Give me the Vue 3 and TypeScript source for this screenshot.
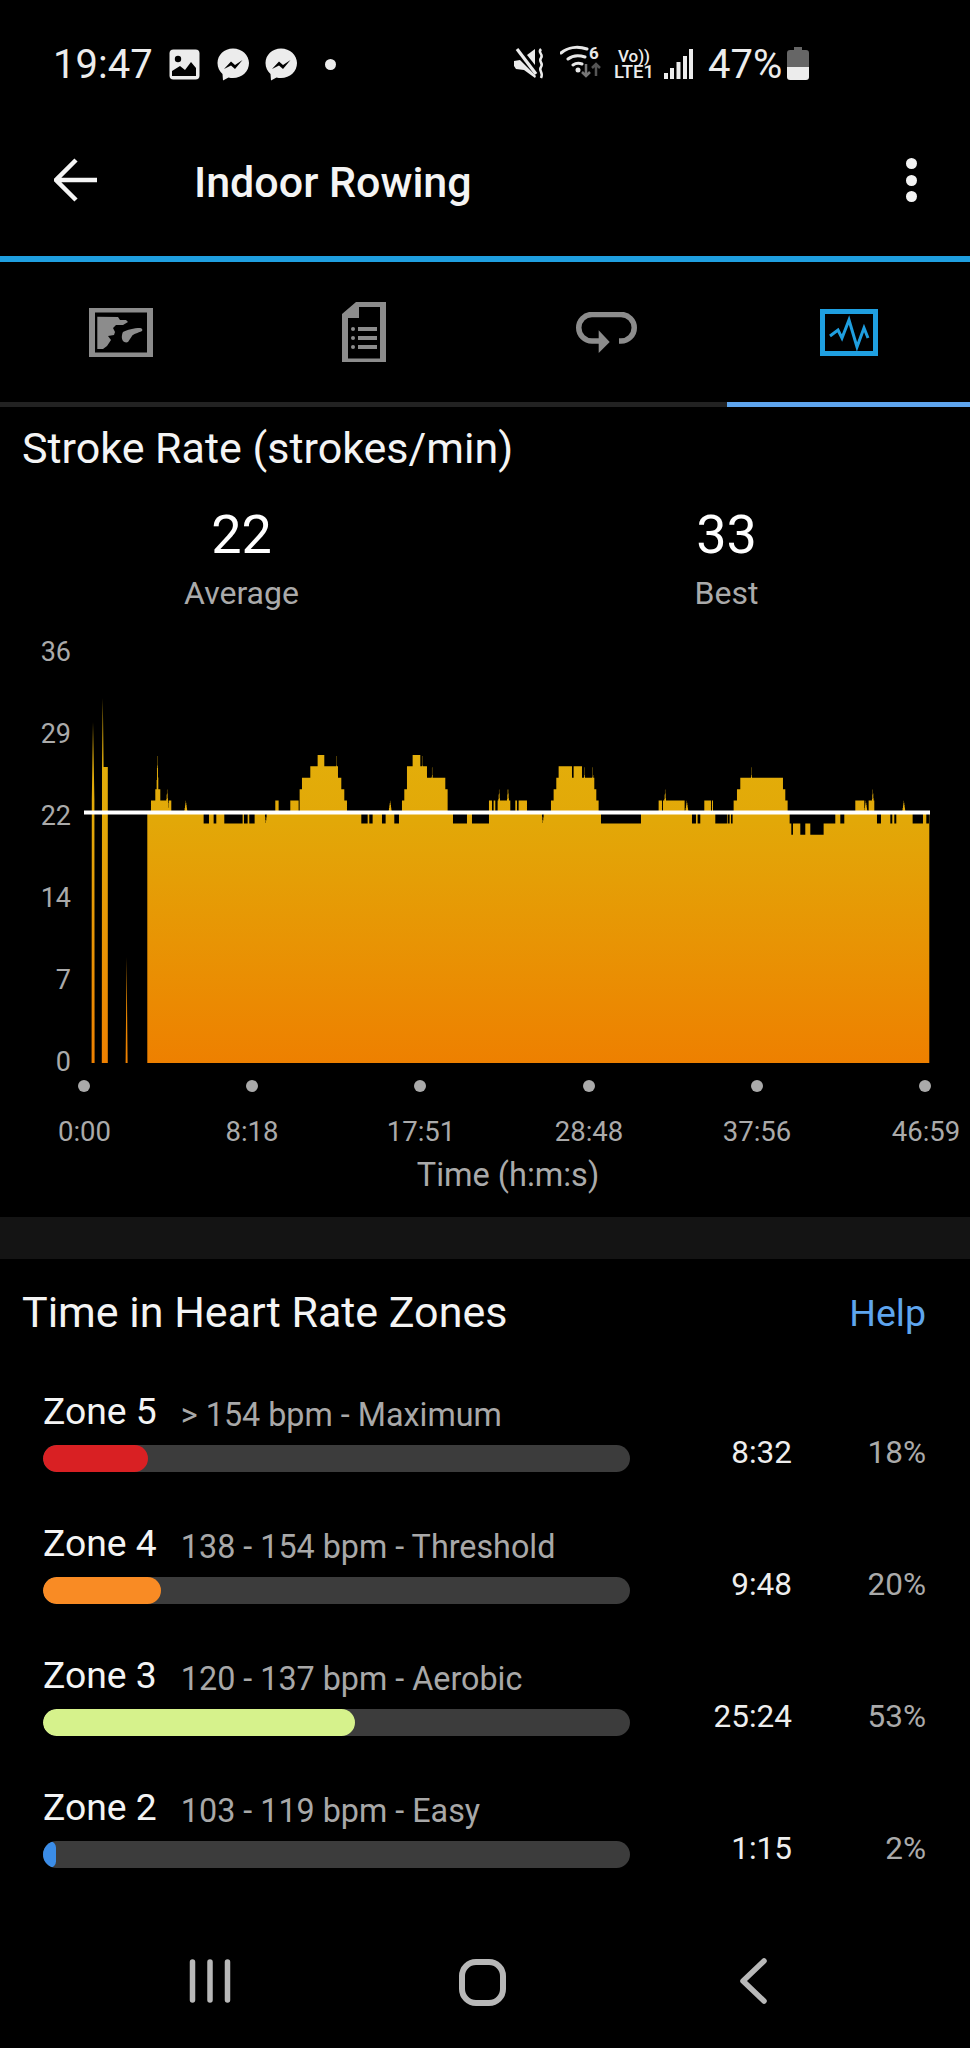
<script setup lang="ts">
type Seg = [number, number, number]
type Spike = [number, number]

const LEFT = 147.3
const RIGHT = 929.3
const y = (l: number) => 1063 - l * 11.41
const a = (z: number) => 40 + z / 3
const b = (z: number) => 490 + z / 3

const segsA: Seg[] = [
  [332, 345, 23], [345, 360, 24], [360, 378, 23], [385, 393, 23],
  [490, 506, 21], [520, 528, 21], [552, 607, 21], [611, 622, 21], [627, 643, 21],
  [705, 715, 23], [750, 775, 23], [778, 785, 24], [785, 790, 25], [790, 810, 25],
  [810, 832, 26], [832, 852, 27], [852, 893, 26], [893, 903, 25], [903, 912, 24], [912, 920, 23],
  [963, 982, 21], [987, 997, 21], [1025, 1036, 21], [1062, 1076, 21],
  [1085, 1092, 23], [1092, 1100, 24], [1100, 1117, 26], [1117, 1140, 27], [1140, 1160, 26],
  [1160, 1170, 25], [1170, 1215, 25], [1215, 1222, 24],
  [1238, 1280, 21], [1295, 1346, 21], [1346, 1353, 23],
]
const segsB: Seg[] = [
  [0, 5, 23], [10, 15, 23], [22, 60, 23], [75, 80, 23], [85, 110, 23],
  [182, 190, 23], [190, 198, 24], [198, 205, 25], [205, 245, 26], [245, 250, 25], [250, 275, 26],
  [275, 312, 25], [312, 318, 24], [318, 325, 23], [332, 452, 21],
  [505, 515, 23], [518, 583, 23], [605, 617, 21], [622, 630, 21], [642, 662, 23], [665, 668, 23],
  [675, 710, 21], [712, 718, 21], [722, 727, 21], [730, 740, 23], [740, 750, 24], [750, 878, 25],
  [878, 885, 24], [885, 892, 23], [898, 903, 21], [903, 908, 20], [908, 915, 21], [915, 930, 21],
  [930, 945, 20], [945, 960, 21], [960, 1000, 20], [1000, 1035, 21],
  [1050, 1062, 21], [1095, 1122, 23], [1135, 1152, 23], [1160, 1172, 21], [1200, 1206, 21],
  [1212, 1218, 21], [1267, 1298, 21], [1308, 1316, 21],
]
const spikesA: Spike[] = [
  [352, 27], [381, 24], [437, 23], [889, 27], [1050, 23], [1146, 27], [1176, 26],
  [1377, 24], [1404, 24],
]
const spikesB: Spike[] = [
  [27, 24], [53, 24], [283, 26], [308, 26], [525, 24], [590, 23], [784, 26], [1127, 23],
  [1148, 24], [1241, 23],
]
const dips: number[] = [a(677), b(158)]

function buildArea(): string {
  const step = 1 / 3
  const n = Math.round((RIGHT - LEFT) / step)
  const ys: number[] = new Array(n).fill(y(22))
  const paint = (x0: number, x1: number, l: number) => {
    for (let i = 0; i < n; i++) {
      const x = LEFT + i * step
      if (x >= x0 && x < x1) ys[i] = y(l)
    }
  }
  segsA.forEach(([s, e, l]) => paint(a(s), a(e), l))
  segsB.forEach(([s, e, l]) => paint(b(s), b(e), l))
  const spike = (cx: number, l: number) => {
    for (let i = 0; i < n; i++) {
      const d = Math.abs(LEFT + i * step - cx)
      if (d < 1.6) ys[i] = Math.min(ys[i], y(l) + (d / 1.6) * (y(22) - y(l)))
    }
  }
  spikesA.forEach(([z, l]) => spike(a(z), l))
  spikesB.forEach(([z, l]) => spike(b(z), l))
  dips.forEach((cx) => {
    for (let i = 0; i < n; i++) {
      const d = Math.abs(LEFT + i * step - cx)
      if (d < 1.2) ys[i] = Math.max(ys[i], y(21) - (d / 1.2) * (y(21) - y(22)))
    }
  })
  let p = `M${LEFT} 1063L${LEFT} ${ys[0].toFixed(1)}`
  let prev = ys[0]
  ys.forEach((v, i) => {
    if (v !== prev) {
      const x = (LEFT + i * step).toFixed(2)
      p += `L${x} ${prev.toFixed(1)}L${x} ${v.toFixed(1)}`
      prev = v
    }
  })
  p += `L${RIGHT} ${prev.toFixed(1)}L${RIGHT} 1063Z`
  return p
}

const areaPath = buildArea()
const earlyPath =
  'M91.6 1063L91.8 800L93 722L94.4 800L94.6 1063Z' +
  'M101.8 1063L102 767L102.8 698L103.6 767L107.8 767L107.8 1063Z' +
  'M125.6 1063L126.6 957L127.6 1063Z'

const yLabels = [
  { t: '36', y: 661 }, { t: '29', y: 743 }, { t: '22', y: 825 },
  { t: '14', y: 907 }, { t: '7', y: 989 }, { t: '0', y: 1071 },
]
const xLabels = [
  { t: '0:00', x: 84.5, d: 84 }, { t: '8:18', x: 252, d: 252 }, { t: '17:51', x: 421, d: 420 },
  { t: '28:48', x: 589, d: 589 }, { t: '37:56', x: 757, d: 757 }, { t: '46:59', x: 926, d: 925 },
]
const zones = [
  { name: 'Zone 5', range: '> 154 bpm - Maximum', time: '8:32', pct: '18%', w: 105, color: '#d92023' },
  { name: 'Zone 4', range: '138 - 154 bpm - Threshold', time: '9:48', pct: '20%', w: 118, color: '#f98b24' },
  { name: 'Zone 3', range: '120 - 137 bpm - Aerobic', time: '25:24', pct: '53%', w: 312, color: '#d6f28c' },
  { name: 'Zone 2', range: '103 - 119 bpm - Easy', time: '1:15', pct: '2%', w: 13, color: '#3b8de8' },
]
const bubble = 'M16 .5C7 .5.5 7 .5 15c0 4.400 2 8.300 5 11l.5 6.500 5.500-3c1.500.4 3 .6 4.500.6 9 0 16-6.600 16-15C32 7 25 .5 16 .5z'
const zig = 'M7 21l7-7.500 4 3.500 7.500-5-7.500 9-4-3.500z'
</script>

<template>
  <div class="screen">
    <div class="status">
      <span class="clock">19:47</span>
      <svg class="ic-photo" width="31" height="31" viewBox="0 0 31 31">
        <rect x="0.500" y="0.500" width="30" height="30" rx="4" fill="#ececec" />
        <path d="M3 27v-5l8-5 5 4 6-8 5 6v8z" fill="#000" />
        <circle cx="9" cy="10" r="3.200" fill="#000" />
      </svg>
      <svg class="ic-msg" width="33" height="33" viewBox="0 0 33 33"><path :d="bubble" fill="#ececec" /><path :d="zig" fill="#000" /></svg>
      <svg class="ic-msg2" width="33" height="33" viewBox="0 0 33 33"><path :d="bubble" fill="#ececec" /><path :d="zig" fill="#000" /></svg>
      <span class="dot"></span>
      <span class="grow"></span>
      <svg class="ic-mute" width="32" height="32" viewBox="0 0 32 32">
        <path d="M0 13l6-1 16 16-1 2-11-8-8-1-2-3z" fill="#ececec" />
        <path d="M13 7l8-6v16z" fill="#ececec" />
        <path d="M3 1l19 25" stroke="#ececec" stroke-width="3.200" />
        <path d="M27 1c-4 4 3 5 0 9s3 5 0 9 3 5 0 11" fill="none" stroke="#ececec" stroke-width="2.500" />
      </svg>
      <svg class="ic-wifi" width="41" height="40" viewBox="0 -4 41 40">
        <path d="M1 7C8 1 18 0 27 3M8 13c5-4 11-4 17-2M13 19c3-2 6-2 9-1" fill="none" stroke="#e8e8e8" stroke-width="3" stroke-linecap="round" />
        <circle cx="18" cy="24" r="2.500" fill="#e8e8e8" />
        <text x="29" y="13" class="six">6</text>
        <path d="M26 18v12m-4-4l4 4 4-4" fill="none" stroke="#777" stroke-width="2.500" />
        <path d="M36 30V18m-4 4l4-4 4 4" fill="none" stroke="#555" stroke-width="2.500" />
      </svg>
      <div class="volte"><span class="vo">Vo))</span><span class="lte">LTE1</span></div>
      <svg class="ic-signal" width="29" height="30" viewBox="0 0 29 30">
        <rect x="0" y="24" width="4" height="6" fill="#ececec" />
        <rect x="6" y="19" width="4" height="11" fill="#ececec" />
        <rect x="12.500" y="13" width="4" height="17" fill="#ececec" />
        <rect x="19" y="7" width="4" height="23" fill="#ececec" />
        <rect x="25" y="0" width="4" height="30" fill="#ececec" />
      </svg>
      <span class="batt-text">47%</span>
      <svg class="ic-batt" width="22" height="33" viewBox="0 0 22 33">
        <path d="M7 0h8v3h4a3 3 0 0 1 3 3v14H0V6a3 3 0 0 1 3-3h4z" fill="#666" />
        <path d="M0 20h22v10a3 3 0 0 1-3 3H3a3 3 0 0 1-3-3z" fill="#ececec" />
      </svg>
    </div>

    <header class="header">
      <svg width="44" height="44" viewBox="0 0 44 44" class="back">
        <path d="M43 22H3M22 2L2 22l20 20" fill="none" stroke="#f4f4f4" stroke-width="4.500" />
      </svg>
      <h1 class="title">Indoor Rowing</h1>
      <span class="grow"></span>
      <div class="menu"><i></i><i></i><i></i></div>
    </header>

    <nav class="tabs">
      <div class="tab">
        <svg width="64" height="49" viewBox="0 0 64 49">
          <path fill-rule="evenodd" d="M0 0h64v49H0zM6 4.500v40h52v-40z" fill="#8c8c8c" />
          <path d="M8.300 8.700L29 9l2 3 6 0 2 2-5 3-7 0-3 3 2 4-1 3-6 1 3 4-4 6-4 3H8.300z" fill="#8c8c8c" />
          <path d="M34 33c-2-3-1-7 0-9 4-2 11-4 17-4 2 0 3 2 2 3-4 2-9 3-10 5l-4 6c-2 1-4 0-5-1z" fill="#8c8c8c" />
        </svg>
      </div>
      <div class="tab">
        <svg width="44" height="60" viewBox="0 0 44 60">
          <path fill-rule="evenodd" d="M14 0h30v60H0V12zM17 5v11H6v40.500h32V5z" fill="#8c8c8c" />
          <circle cx="11" cy="27" r="2" fill="#8c8c8c" /><rect x="16" y="25" width="19" height="4" fill="#8c8c8c" />
          <circle cx="11" cy="36" r="2" fill="#8c8c8c" /><rect x="16" y="34" width="19" height="4" fill="#8c8c8c" />
          <circle cx="11" cy="45" r="2" fill="#8c8c8c" /><rect x="16" y="43" width="19" height="4" fill="#8c8c8c" />
        </svg>
      </div>
      <div class="tab">
        <svg width="61" height="41" viewBox="0 0 61 41">
          <path d="M23 29H16A13.200 13.200 0 0 1 16 2.500H45A13.200 13.200 0 0 1 45 29H43" fill="none" stroke="#8c8c8c" stroke-width="5.500" />
          <path d="M22.700 18.300L33.700 30 22.700 41z" fill="#8c8c8c" />
        </svg>
      </div>
      <div class="tab">
        <svg width="58" height="47" viewBox="0 0 58 47">
          <rect x="2.500" y="2.500" width="53" height="42" fill="none" stroke="#1f9fe0" stroke-width="5" />
          <path d="M10 27l8-6 4 8 7-18 8 27 7-19 4 10" fill="none" stroke="#1f9fe0" stroke-width="3" />
        </svg>
      </div>
    </nav>
    <div class="tabline"><span></span></div>

    <section class="stroke">
      <h2 class="h2">Stroke Rate (strokes/min)</h2>
      <div class="stats">
        <div class="stat"><b>22</b><span>Average</span></div>
        <div class="stat"><b>33</b><span>Best</span></div>
      </div>
    </section>

    <svg class="chart" width="970" height="587" viewBox="0 630 970 587">
      <defs>
        <linearGradient id="fill" gradientUnits="userSpaceOnUse" x1="0" y1="690" x2="0" y2="1063">
          <stop offset="0" stop-color="#e4b40c" />
          <stop offset="0.35" stop-color="#e2a808" />
          <stop offset="1" stop-color="#ee8000" />
        </linearGradient>
      </defs>
      <text v-for="l in yLabels" :key="l.t" x="71" :y="l.y" class="ylab">{{ l.t }}</text>
      <path :d="earlyPath" fill="url(#fill)" />
      <path :d="areaPath" fill="url(#fill)" />
      <rect x="84" y="810.500" width="846" height="4" fill="#fff" />
      <g v-for="l in xLabels" :key="l.t">
        <circle :cx="l.d" cy="1086" r="6" fill="#aaa" />
        <text :x="l.x" y="1141" class="xlab">{{ l.t }}</text>
      </g>
      <text x="508" y="1186" class="xtitle">Time (h:m:s)</text>
    </svg>

    <div class="band"></div>

    <section class="zones">
      <div class="zones-head">
        <h2 class="h2">Time in Heart Rate Zones</h2>
        <span class="help">Help</span>
      </div>
      <div v-for="z in zones" :key="z.name" class="zone">
        <div class="zone-main">
          <div class="zone-label"><span class="zone-name">{{ z.name }}</span><span class="zone-range">{{ z.range }}</span></div>
          <div class="track"><div class="fill" :style="{ width: z.w + 'px', background: z.color }"></div></div>
        </div>
        <span class="zone-time">{{ z.time }}</span>
        <span class="zone-pct">{{ z.pct }}</span>
      </div>
    </section>

    <span class="grow"></span>

    <footer class="navbar">
      <svg width="60" height="60" viewBox="0 0 60 60">
        <path d="M12.500 10v38M30 10v38M47.500 10v38" fill="none" stroke="#b8b8b8" stroke-width="5.500" stroke-linecap="round" />
      </svg>
      <svg width="60" height="60" viewBox="0 0 60 60">
        <rect x="10" y="10" width="41" height="41" rx="14" fill="none" stroke="#b8b8b8" stroke-width="6" />
      </svg>
      <svg width="60" height="60" viewBox="0 0 60 60">
        <path d="M41 10L20 30l21 20" transform="translate(0 -1)" fill="none" stroke="#b8b8b8" stroke-width="5.500" stroke-linecap="round" stroke-linejoin="round" />
      </svg>
    </footer>
  </div>
</template>

<style>
html, body { margin: 0; background: #000; }
</style>

<style scoped>
.screen {
  width: 970px; height: 2048px; background: #000; color: #f4f4f4; overflow: hidden;
  display: flex; flex-direction: column; font-family: Roboto, "Liberation Sans", sans-serif;
}
.grow { flex: 1; }
.status { height: 128px; display: flex; align-items: center; padding: 0 161px 0 53px; box-sizing: border-box; }
.clock { font-size: 40px; width: 116px; color: #ececec; white-space: nowrap; }
.ic-msg { margin-left: 17px; }
.ic-msg2 { margin-left: 15px; }
.dot { width: 11px; height: 11px; border-radius: 50%; background: #ececec; margin-left: 27px; }
.ic-mute { margin-right: 14px; }
.ic-wifi { margin-top: -4px; }
.six { font: 700 17px Roboto, sans-serif; fill: #e8e8e8; }
.volte { margin-left: 12px; width: 42px; display: flex; flex-direction: column; align-items: center; line-height: 16px; }
.vo { font-size: 17px; font-weight: 500; color: #ececec; }
.lte { font-size: 18.500px; font-weight: 500; color: #ececec; }
.ic-signal { margin-left: 9px; }
.batt-text { font-size: 40px; margin-left: 15px; width: 79px; color: #ececec; white-space: nowrap; }
.ic-batt { margin-top: -1px; }
.header { height: 128px; box-sizing: border-box; padding: 0 53px 24px 54px; display: flex; align-items: center; }
.title { margin: 4px 0 0 96px; font-size: 43px; font-weight: 500; color: #f4f4f4; }
.back { flex: none; }
.menu { display: flex; flex-direction: column; gap: 5.500px; }
.menu i { display: block; width: 11px; height: 11px; border-radius: 50%; background: #f4f4f4; }
.tabs { border-top: 6px solid #1f9fe0; height: 140px; display: grid; grid-template-columns: repeat(4, 1fr); }
.tab { display: flex; align-items: center; justify-content: center; }
.tabline { height: 5px; background: #222; display: flex; justify-content: flex-end; }
.tabline span { width: 243px; background: #5ea5ee; }
.stroke { height: 223px; box-sizing: border-box; padding-top: 18px; }
.h2 { margin: 0; font-size: 43px; font-weight: 400; color: #f4f4f4; line-height: 47px; }
.stroke .h2 { padding-left: 22px; }
.stats { display: grid; grid-template-columns: 483px 487px; margin-top: 33px; }
.stat { display: flex; flex-direction: column; align-items: center; }
.stat b { font-weight: 400; font-size: 54px; line-height: 60px; color: #fff; }
.stat span { font-size: 32px; line-height: 40px; color: #aaa; margin-top: 8px; }
.chart { display: block; flex: none; }
.ylab { font: 400 27px Roboto, sans-serif; fill: #aaa; text-anchor: end; }
.xlab { font: 400 27.500px Roboto, sans-serif; fill: #aaa; text-anchor: middle; }
.xtitle { font: 400 32.500px Roboto, sans-serif; fill: #aaa; text-anchor: middle; }
.band { height: 42px; background: #141414; }
.zones { padding: 30px 44px 0 0; }
.zones-head { display: flex; justify-content: space-between; align-items: center; padding-left: 22px; margin-bottom: 42px; }
.help { color: #5ea5ee; font-size: 37.500px; }
.zone { display: flex; align-items: flex-end; height: 132px; padding-left: 43px; box-sizing: border-box; }
.zone-main { width: 587px; }
.zone-label { display: flex; align-items: baseline; gap: 24px; }
.zone-name { font-size: 37.300px; color: #f4f4f4; }
.zone-range { font-size: 32.300px; color: #a8a8a8; position: relative; top: 2px; }
.track { height: 27px; border-radius: 14px; background: #3c3c3c; margin: 12px 0 38px; overflow: hidden; }
.fill { height: 100%; border-radius: 14px; }
.zone-time { width: 162px; text-align: right; font-size: 31.500px; color: #eee; align-self: flex-start; margin-top: 56px; }
.zone-pct { width: 134px; text-align: right; font-size: 31.500px; color: #aaa; align-self: flex-start; margin-top: 56px; }
.navbar { display: flex; justify-content: space-between; padding: 0 187px 36px 180px; }
</style>
